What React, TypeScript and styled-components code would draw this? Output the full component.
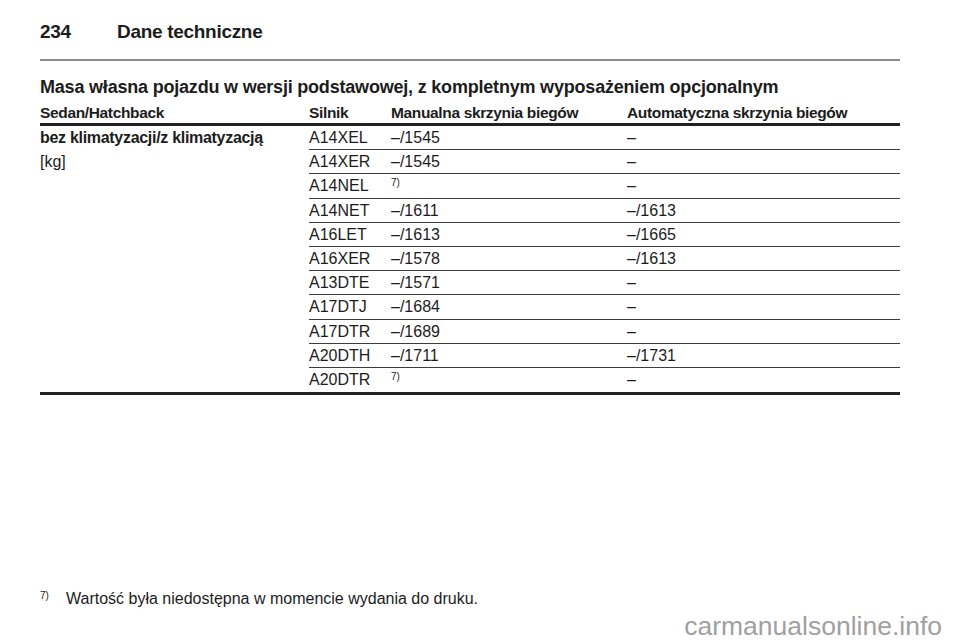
import React from 'react';
import styled, { createGlobalStyle } from 'styled-components';

const GlobalStyle = createGlobalStyle`
  html, body {
    margin: 0;
    padding: 0;
    background: #fff;
  }
  body {
    font-family: "Liberation Sans", Arial, sans-serif;
    color: #1c1c1c;
  }
`;

const Page = styled.div`
  position: relative;
  width: 960px;
  height: 642px;
  padding: 0 60px 0 40px;
  box-sizing: border-box;
  overflow: hidden;
`;

const TitleRow = styled.div`
  display: flex;
  padding-top: 21px;
  height: 22px;
  line-height: 22px;
  font-size: 19px;
  font-weight: bold;
  letter-spacing: -0.3px;
`;

const PageNumber = styled.span`
  width: 77px;
`;

const TopRule = styled.div`
  margin-top: 16px;
  height: 2px;
  background: #8c8c8c;
`;

const Heading = styled.h2`
  margin: 15px 0 0 0;
  font-size: 18px;
  line-height: 22px;
  font-weight: bold;
  letter-spacing: -0.2px;
`;

const Grid = styled.div`
  display: grid;
  grid-template-columns: 269px 82px 236px 273px;
  border-bottom: 3px solid #222;
`;

const HeadCell = styled.div`
  height: 28px;
  box-sizing: border-box;
  display: flex;
  align-items: flex-end;
  padding-bottom: 2px;
  font-size: 15.5px;
  font-weight: bold;
  line-height: 16px;
  letter-spacing: -0.35px;
  border-bottom: 3px solid #222;
  white-space: nowrap;
`;

const Cell = styled.div<{ $line?: boolean; $bold?: boolean }>`
  height: 24.2px;
  box-sizing: border-box;
  display: flex;
  align-items: center;
  padding-top: 1px;
  font-size: 16px;
  font-weight: ${(p) => (p.$bold ? 'bold' : 'normal')};
  letter-spacing: ${(p) => (p.$bold ? '-0.3px' : '0')};
  border-bottom: ${(p) => (p.$line ? '1px solid #3c3c3c' : '1px solid transparent')};
  white-space: nowrap;
`;

const Note = styled.sup`
  font-size: 10px;
  line-height: 0;
  position: relative;
  top: -3px;
  vertical-align: super;
`;

const Footnote = styled.div`
  display: flex;
  margin-top: 195px;
  font-size: 16px;
  line-height: 18px;
`;

const FootMark = styled.span`
  width: 26px;
  font-size: 10px;
  line-height: 12px;
`;

const Watermark = styled.div`
  position: absolute;
  right: 18px;
  bottom: 1px;
  font-size: 26.5px;
  line-height: 30px;
  color: #a0a0a0;
`;

type Row = { engine: string; manual: string | null; auto: string };

const rows: Row[] = [
  { engine: 'A14XEL', manual: '–/1545', auto: '–' },
  { engine: 'A14XER', manual: '–/1545', auto: '–' },
  { engine: 'A14NEL', manual: null, auto: '–' },
  { engine: 'A14NET', manual: '–/1611', auto: '–/1613' },
  { engine: 'A16LET', manual: '–/1613', auto: '–/1665' },
  { engine: 'A16XER', manual: '–/1578', auto: '–/1613' },
  { engine: 'A13DTE', manual: '–/1571', auto: '–' },
  { engine: 'A17DTJ', manual: '–/1684', auto: '–' },
  { engine: 'A17DTR', manual: '–/1689', auto: '–' },
  { engine: 'A20DTH', manual: '–/1711', auto: '–/1731' },
  { engine: 'A20DTR', manual: null, auto: '–' },
];

const App = () => {
  return (
    <Page>
      <GlobalStyle />
      <TitleRow>
        <PageNumber>234</PageNumber>
        <span>Dane techniczne</span>
      </TitleRow>
      <TopRule />
      <Heading>Masa własna pojazdu w wersji podstawowej, z kompletnym wyposażeniem opcjonalnym</Heading>
      <Grid>
        <HeadCell>Sedan/Hatchback</HeadCell>
        <HeadCell>Silnik</HeadCell>
        <HeadCell>Manualna skrzynia biegów</HeadCell>
        <HeadCell>Automatyczna skrzynia biegów</HeadCell>
        {rows.map((r, i) => {
          const line = i < rows.length - 1;
          return (
            <React.Fragment key={r.engine}>
              <Cell $bold={i === 0}>
                {i === 0 ? 'bez klimatyzacji/z klimatyzacją' : i === 1 ? '[kg]' : ''}
              </Cell>
              <Cell $line={line}>{r.engine}</Cell>
              <Cell $line={line}>{r.manual ?? <Note>7)</Note>}</Cell>
              <Cell $line={line}>{r.auto}</Cell>
            </React.Fragment>
          );
        })}
      </Grid>
      <Footnote>
        <FootMark>7)</FootMark>
        <span>Wartość była niedostępna w momencie wydania do druku.</span>
      </Footnote>
      <Watermark>carmanualsonline.info</Watermark>
    </Page>
  );
};

export default App;
